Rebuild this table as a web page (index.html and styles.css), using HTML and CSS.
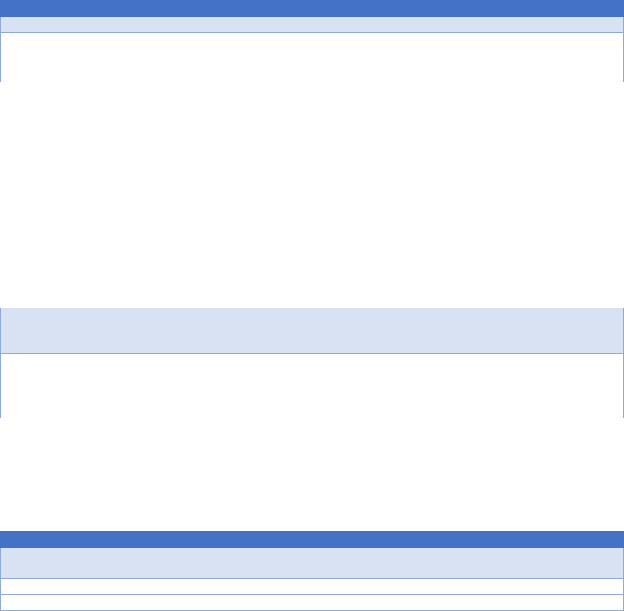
FILE: index.html
```html
<!DOCTYPE html>
<html lang="en">
<head>
  <meta charset="UTF-8">
  <meta name="viewport" content="width=device-width, initial-scale=1.0">
  <title>Tables</title>
  <link rel="stylesheet" href="styles.css">
</head>
<body>
  <div class="page">
    <div class="table first">
      <div class="head"></div>
      <div class="row band r15"></div>
      <div class="row r49"></div>
    </div>

    <div class="table second">
      <div class="row band r46"></div>
      <div class="row r63"></div>
    </div>

    <div class="table third">
      <div class="head"></div>
      <div class="row band r30"></div>
      <div class="row r15"></div>
      <div class="row r15"></div>
    </div>
  </div>
</body>
</html>
```

FILE: styles.css
```css
body {
  margin: 0;
  background-color: #ffffff;
  font-family: "Liberation Sans", Arial, sans-serif;
}

.page {
  display: flex;
  flex-direction: column;
  width: 624px;
}

.table {
  display: flex;
  flex-direction: column;
}

.second {
  margin-top: 226px;
}

.third {
  margin-top: 113px;
}

.head {
  height: 17px;
  background-color: #4472c4;
}

.row {
  border-left: 1px solid #8eaadb;
  border-right: 1px solid #8eaadb;
  border-bottom: 1px solid #8eaadb;
  background-color: #ffffff;
}

.row.band {
  background-color: #d9e2f3;
}

/* la dernière ligne des deux premiers tableaux n'a pas de bordure basse */
.first .row:last-child,
.second .row:last-child {
  border-bottom: none;
}

.r15 { height: 15px; }
.r30 { height: 30px; }
.r46 { height: 45px; }
.r49 { height: 49px; }
.r63 { height: 64px; }
```
